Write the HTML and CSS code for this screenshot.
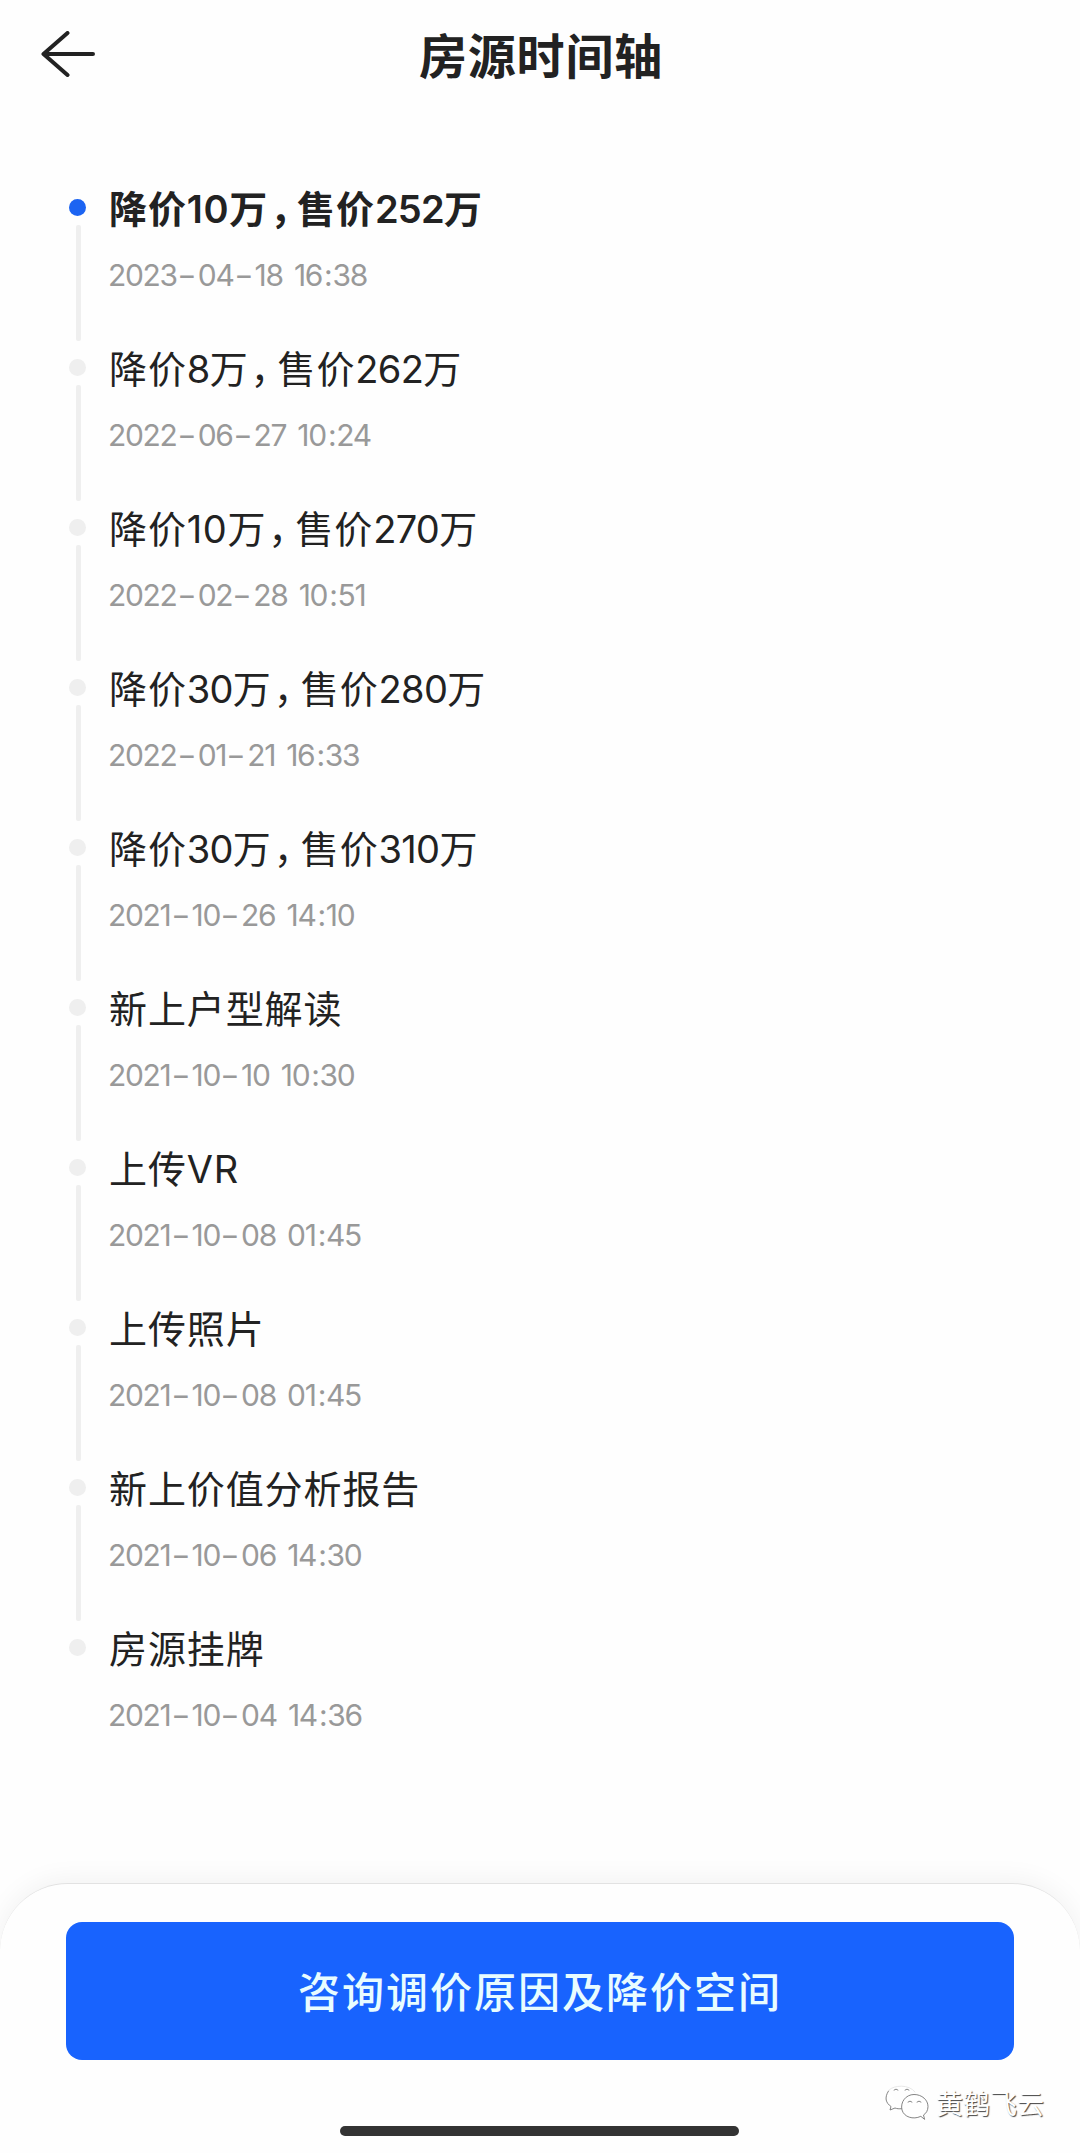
FILE: index.html
```html
<!DOCTYPE html>
<html lang="zh-CN">
<head>
    <meta charset="UTF-8">
    <meta name="viewport" content="width=device-width, initial-scale=1.0">
    <link rel="stylesheet" href="styles.css">
    <title>房源时间轴</title>
</head>
<body>

    <header class="header">
        <svg class="back" viewBox="0 0 54 46" fill="none" stroke="#222" stroke-width="4" stroke-linecap="round" stroke-linejoin="round">
            <path d="M26.500 2L2.500 23L26.500 44M2.500 23H52"/>
        </svg>
        <h1 class="title">房源时间轴</h1>
    </header>

    <ul class="timeline">
        <li class="item active">
            <h2 class="event">降价<span class="num wide">10</span>万<span class="comma">，</span>售价<span class="num">252</span>万</h2>
            <p class="date">2023<i>-</i>04<i>-</i>18 16<b>:</b>38</p>
        </li>
        <li class="item">
            <h2 class="event">降价<span class="num">8</span>万<span class="comma">，</span>售价<span class="num">262</span>万</h2>
            <p class="date">2022<i>-</i>06<i>-</i>27 10<b>:</b>24</p>
        </li>
        <li class="item">
            <h2 class="event">降价<span class="num wide">10</span>万<span class="comma">，</span>售价<span class="num">270</span>万</h2>
            <p class="date">2022<i>-</i>02<i>-</i>28 10<b>:</b>51</p>
        </li>
        <li class="item">
            <h2 class="event">降价<span class="num">30</span>万<span class="comma">，</span>售价<span class="num">280</span>万</h2>
            <p class="date">2022<i>-</i>01<i>-</i>21 16<b>:</b>33</p>
        </li>
        <li class="item">
            <h2 class="event">降价<span class="num">30</span>万<span class="comma">，</span>售价<span class="num">310</span>万</h2>
            <p class="date">2021<i>-</i>10<i>-</i>26 14<b>:</b>10</p>
        </li>
        <li class="item">
            <h2 class="event">新上户型解读</h2>
            <p class="date">2021<i>-</i>10<i>-</i>10 10<b>:</b>30</p>
        </li>
        <li class="item">
            <h2 class="event">上传<span class="num wide">VR</span></h2>
            <p class="date">2021<i>-</i>10<i>-</i>08 01<b>:</b>45</p>
        </li>
        <li class="item">
            <h2 class="event">上传照片</h2>
            <p class="date">2021<i>-</i>10<i>-</i>08 01<b>:</b>45</p>
        </li>
        <li class="item">
            <h2 class="event">新上价值分析报告</h2>
            <p class="date">2021<i>-</i>10<i>-</i>06 14<b>:</b>30</p>
        </li>
        <li class="item">
            <h2 class="event">房源挂牌</h2>
            <p class="date">2021<i>-</i>10<i>-</i>04 14<b>:</b>36</p>
        </li>
    </ul>

    <footer class="sheet">
        <button class="consult">咨询调价原因及降价空间</button>
        <div class="watermark">
            <svg class="wechat" viewBox="0 0 44 36" fill="#fff" stroke="#777" stroke-width="0.9" stroke-linecap="round" stroke-linejoin="round">
                <path d="M3.500 6C-1 13 1 18 6 21.500L5 25L10 23C12 23.700 14 24 16.500 23.700" />
                <path d="M4 5C9 0 24-1 30 7" stroke="#e4e4e4"/>
                <path d="M35.500 31.500C28 35 19 32 17 25C15 17 21 9.500 29 9.500C37 9.500 43 15 43 21.500C43 25.500 41 28.500 38.500 30L39.500 34Z"/>
                <path d="M9 5Q11 3 13 5M20 5Q22 3 24 5M23 17Q25 15 27 17M32 17Q34 15 36 17" fill="none"/>
            </svg>
            <span>黄鹤飞云</span>
        </div>
        <div class="home-bar"></div>
    </footer>

</body>
</html>
```
FILE: styles.css
```css
* {
    box-sizing: border-box;
}
body {
    margin: 0;
    height: 2153px;
    display: flex;
    flex-direction: column;
    overflow: hidden;
    background-color: #fefefe;
    color: #222;
    font-family: Inter, 'Noto Sans CJK SC', sans-serif;
}
.header {
    display: grid;
    grid-template-columns: 54px 1fr 54px;
    height: 112px;
    padding: 0 41px;
}
.back {
    width: 54px;
    height: 46px;
    margin-top: 31px;
}
.title {
    margin: 0;
    padding-left: 2px;
    text-align: center;
    font-family: 'Noto Sans CJK SC', sans-serif;
    font-size: 48px;
    font-weight: 700;
    letter-spacing: 0.8px;
    line-height: 106px;
}
.timeline {
    list-style: none;
    margin: 0;
    padding: 68px 0 0 69px;
}
.item {
    display: grid;
    grid-template-columns: 17px 1fr;
    grid-template-rows: 56px 104px;
    column-gap: 23px;
    height: 160px;
}
/* point et trait de la frise */
.item::before {
    content: '';
    width: 17px;
    height: 17px;
    margin-top: 19px;
    border-radius: 50%;
    background-color: #efefef;
}
.item::after {
    content: '';
    grid-column: 1;
    grid-row: 2;
    width: 5px;
    height: 116px;
    margin-left: 7px;
    margin-top: -11px;
    border-radius: 2px;
    background-color: #efefef;
}
.item:last-child::after {
    display: none;
}
.active::before {
    background-color: #1c64f2;
}
.event {
    margin: 0;
    font-size: 38px;
    font-weight: 400;
    letter-spacing: 0.9px;
    line-height: 58px;
    white-space: nowrap;
}
.active .event {
    font-weight: 700;
}
.num {
    letter-spacing: -0.7px;
}
.wide {
    letter-spacing: 0.6px;
}
.active .num {
    font-weight: 600;
}
.comma {
    padding-left: 2px;
    letter-spacing: -11px;
}
.date {
    grid-column: 2;
    grid-row: 2;
    margin: 18px 0 0 -1px;
    color: #999;
    font-size: 30px;
    letter-spacing: -1.3px;
    word-spacing: 4px;
    line-height: 42px;
    white-space: nowrap;
}
.date i {
    display: inline-block;
    width: 20px;
    margin: 0 1px 0 0;
    font-style: normal;
    letter-spacing: 0;
    text-align: center;
    transform: scaleX(1.4);
}
.date b {
    margin: 0 1px 0 2px;
    font-weight: 400;
}
.sheet {
    display: flex;
    flex-direction: column;
    align-items: center;
    height: 270px;
    margin-top: auto;
    padding-top: 38px;
    border-top: 1px solid #e2e2e2;
    border-radius: 68px 68px 0 0;
    background-color: #fefefe;
    box-shadow: 0 -4px 26px rgba(0, 0, 0, 0.05);
}
.consult {
    width: 948px;
    height: 138px;
    padding: 0 0 3px;
    border: none;
    border-radius: 16px;
    background-color: #1863fe;
    color: #e8fcff;
    font-family: 'Noto Sans CJK SC', sans-serif;
    font-size: 42px;
    font-weight: 500;
    letter-spacing: 2px;
}
.watermark {
    display: flex;
    align-items: center;
    align-self: flex-end;
    gap: 7px;
    height: 40px;
    margin-top: 23px;
    margin-right: 36px;
    color: #fff;
    font-family: 'Noto Sans CJK SC', sans-serif;
    font-size: 27px;
    line-height: 40px;
    text-shadow: 1px 1px 1px #444;
}
.wechat {
    width: 44px;
    height: 36px;
}
.home-bar {
    width: 399px;
    height: 10px;
    margin-top: 3px;
    margin-right: 2px;
    border-radius: 5px;
    background-color: #333;
}
```
